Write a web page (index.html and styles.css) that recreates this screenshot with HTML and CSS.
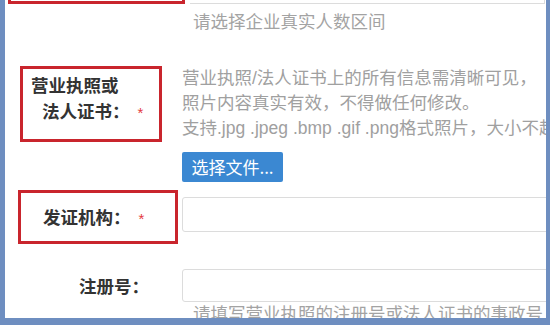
FILE: index.html
```html
<!DOCTYPE html>
<html lang="zh-CN">
<head>
<meta charset="utf-8">
<title>企业认证</title>
<link rel="stylesheet" href="styles.css">
</head>
<body>
<div class="panel">
  <div class="row row-top">
    <div class="mark mark-top"></div>
    <div class="stub"></div>
  </div>
  <div class="hint hint-top">请选择企业真实人数区间</div>

  <div class="row row-license">
    <div class="label-col">
      <div class="mark mark-license">
        <span class="l1">营业执照或</span>
        <span class="l2">法人证书<span class="colon">：</span><em class="req">*</em></span>
      </div>
    </div>
    <div class="field">
      <p class="desc">营业执照/法人证书上的所有信息需清晰可见，<br>照片内容真实有效，不得做任何修改。<br>支持.jpg .jpeg .bmp .gif .png格式照片，大小不超过2M</p>
      <button class="file-btn" type="button">选择文件...</button>
    </div>
  </div>

  <div class="row row-org">
    <div class="label-col">
      <div class="mark mark-org">发证机构<span class="colon">：</span><em class="req">*</em></div>
    </div>
    <div class="field">
      <div class="input input-org"></div>
    </div>
  </div>

  <div class="row row-reg">
    <div class="label-col label-plain">注册号<span class="colon">：</span></div>
    <div class="field">
      <div class="input input-reg"></div>
    </div>
  </div>
  <div class="hint hint-bottom">请填写营业执照的注册号或法人证书的事政号</div>
</div>
</body>
</html>
```
FILE: styles.css
```css
html, body {
  margin: 0;
  padding: 0;
}
body {
  width: 550px;
  height: 325px;
  background: #6e8ec0;
  overflow: hidden;
  font-family: "Liberation Sans", "Noto Sans CJK SC", sans-serif;
  font-size: 17.5px;
}
.panel {
  margin: 0 4px 0 5px;
  width: 541px;
  height: 318px;
  background: #fff;
  overflow: hidden;
  display: flex;
  flex-direction: column;
}
.row {
  display: flex;
  flex-shrink: 0;
}
.label-col {
  width: 177px;
  flex-shrink: 0;
}
.field {
  flex: 1;
  min-width: 0;
}
.mark {
  box-sizing: border-box;
  border: 3px solid #c9252d;
}
.row-top {
  height: 4px;
}
.mark-top {
  margin-left: 3px;
  width: 177px;
  height: 4px;
  border-top: none;
  flex-shrink: 0;
}
.stub {
  flex: 1;
  margin-left: 5px;
  height: 4px;
  box-sizing: border-box;
  border-bottom: 1px solid #dcdcdc;
  border-right: 1px solid #dcdcdc;
  margin-right: 1px;
}
.hint {
  color: #a3a3a3;
  line-height: 24px;
  padding-left: 188px;
  white-space: nowrap;
  flex-shrink: 0;
}
.hint-top {
  margin-top: 6px;
}
.row-license {
  margin-top: 32px;
}
.mark-license {
  margin-left: 15px;
  width: 142px;
  height: 76px;
  padding-top: 3px;
  font-family: "Noto Sans CJK SC", sans-serif;
  font-weight: bold;
  color: #333;
  line-height: 26px;
}
.mark-license .l1 {
  display: block;
  padding-left: 8px;
}
.mark-license .l2 {
  display: block;
  padding-left: 19px;
  white-space: nowrap;
}
.colon {
  font-family: "Noto Sans CJK TC", "Noto Sans CJK SC", sans-serif;
}
.req {
  font-style: normal;
  font-weight: normal;
  color: #e4393c;
  font-size: 15px;
  margin-left: 8px;
  font-family: "Liberation Sans", sans-serif;
}
.desc {
  margin: 0;
  color: #a0a0a0;
  line-height: 25px;
  white-space: nowrap;
}
.file-btn {
  display: block;
  margin-top: 11px;
  height: 30px;
  width: 101px;
  padding: 0;
  border: none;
  border-radius: 2px;
  background: #3b88d2;
  color: #fff;
  font-family: "Noto Sans CJK SC", sans-serif;
  font-size: 17px;
  line-height: 30px;
  text-align: center;
}
.row-org {
  margin-top: 8px;
}
.mark-org {
  margin-left: 13px;
  width: 160px;
  height: 54px;
  padding-left: 22px;
  font-family: "Noto Sans CJK SC", sans-serif;
  font-weight: bold;
  color: #333;
  line-height: 48px;
  white-space: nowrap;
}
.input {
  box-sizing: border-box;
  border: 1px solid #dcdcdc;
  border-radius: 3px;
  width: 380px;
  background: #fff;
}
.input-org {
  margin-top: 7px;
  height: 35px;
}
.row-reg {
  margin-top: 25px;
  align-items: center;
}
.label-plain {
  box-sizing: border-box;
  text-align: right;
  padding-right: 33px;
  font-family: "Noto Sans CJK SC", sans-serif;
  font-weight: bold;
  color: #333;
  line-height: 33px;
}
.input-reg {
  height: 33px;
}
.hint-bottom {
  margin-top: 0;
}
```
